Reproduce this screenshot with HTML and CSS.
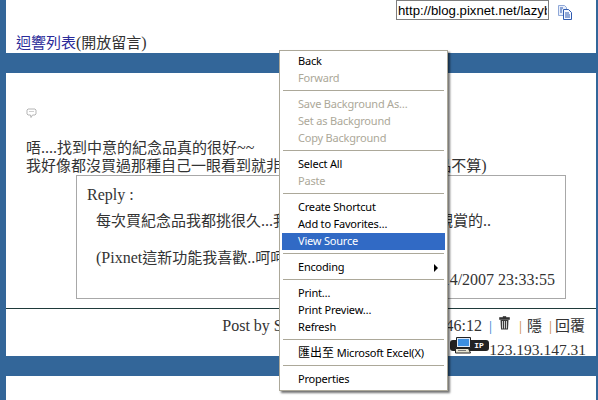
FILE: index.html
```html
<!DOCTYPE html>
<html lang="zh-Hant">
<head>
<meta charset="utf-8">
<title>迴響列表</title>
<link rel="stylesheet" href="styles.css">
</head>
<body>
<div class="page">
  <div class="url-row">
    <input class="url-input" type="text" value="http://blog.pixnet.net/lazybug" readonly>
    <svg class="copy-icon" width="16" height="15" viewBox="0 0 16 15">
      <path d="M1.500 .500h6l2 2v8h-8z" fill="#e8eefa" stroke="#8fa8d8"/>
      <path d="M6.500 4.500h5l3 3v7h-8z" fill="#f6f8ff" stroke="#2f5bb0"/>
      <path d="M8 8h4M8 10h5M8 12h5M3 3h3M3 5h2M3 7h2" stroke="#2f5bb0" fill="none"/>
    </svg>
  </div>
  <div class="title-row"><a class="title-link" href="#">迴響列表</a><span class="lat-l">(</span>開放留言<span class="lat-l">)</span></div>
  <div class="bar"></div>
  <div class="comment">
    <svg class="bubble" width="11" height="11" viewBox="0 0 11 11">
      <path d="M2 1h7l1 1v4l-1 1H6.500L5 9.500 4.500 7H2L1 6V2z" fill="#fff" stroke="#b5b5b5"/>
      <path d="M3 3.500h5" stroke="#cfcfcf"/>
    </svg>
    <p class="comment-text">唔<span class="lat-l">....</span>找到中意的紀念品真的很好<span class="lat-l">~~</span><br>我好像都沒買過那種自己一眼看到就非買不可的東西<span class="lat-l">(</span>衣服或飾品不算<span class="lat-l">)</span></p>
    <div class="reply">
      <div class="reply-label">Reply :</div>
      <p class="reply-line">每次買紀念品我都挑很久<span class="lat-l">...</span>我都是買回家後自己慢慢觀賞的<span class="lat-l">..</span></p>
      <p class="reply-line reply-gap"><span class="lat-l">(Pixnet</span>這新功能我喜歡<span class="lat-l">..</span>呵呵</p>
      <div class="reply-date">01/14/2007 23:33:55</div>
    </div>
  </div>
  <div class="post-meta">
    <div class="post-row"><span class="lat-l">Post by Stephen @ 01/14/2007 22:46:12</span><span class="sep">|</span><svg class="trash" width="11" height="14" viewBox="0 0 11 14">
        <path d="M4 .500h3v1h3.500v2H.500v-2H4z" fill="#333" stroke="#222" stroke-width=".5"/>
        <path d="M1.500 4h8l-.5 9.500H2z" fill="#3a3a3a"/>
        <path d="M3.500 5v7.500M5.500 5v7.500M7.500 5v7.500" stroke="#cfcfcf"/>
      </svg><span class="sep sep-mid">|</span>隱<span class="sep sep-alt">|</span>回覆</div>
    <div class="ip-row">
      <span class="ip-badge">
        <svg class="ip-pc" width="18" height="17" viewBox="0 0 18 17">
          <path d="M2.500 .500h14v10h-14z" fill="#dfe9f7" stroke="#222"/>
          <path d="M4 2h11v7H4z" fill="#3d8fe0"/>
          <path d="M1.500 11.500h13l2 4.500H1.500z" fill="#e6e2cf" stroke="#222"/>
          <path d="M4 13.500h8" stroke="#777"/>
        </svg>
        <span class="ip-tag">IP</span>
      </span>
      <span class="ip-num">123.193.147.31</span>
    </div>
  </div>
  <div class="bar"></div>
</div>
<div class="menu">
  <div class="mi">Back</div>
  <div class="mi off">Forward</div>
  <div class="ms"></div>
  <div class="mi off">Save Background As…</div>
  <div class="mi off">Set as Background</div>
  <div class="mi off">Copy Background</div>
  <div class="ms"></div>
  <div class="mi">Select All</div>
  <div class="mi off">Paste</div>
  <div class="ms"></div>
  <div class="mi">Create Shortcut</div>
  <div class="mi">Add to Favorites…</div>
  <div class="mi on">View Source</div>
  <div class="ms"></div>
  <div class="mi sub">Encoding<span class="arrow"></span></div>
  <div class="ms"></div>
  <div class="mi">Print…</div>
  <div class="mi">Print Preview…</div>
  <div class="mi">Refresh</div>
  <div class="ms"></div>
  <div class="mi"><span class="mi-cjk">匯出至</span> Microsoft Excel(X)</div>
  <div class="ms"></div>
  <div class="mi">Properties</div>
</div>
</body>
</html>
```
FILE: styles.css
```css
html, body {
  margin: 0;
  padding: 0;
  height: 400px;
  overflow: hidden;
  background: #fff;
}
body {
  font-family: "Liberation Serif", "Noto Sans CJK TC", serif;
  font-size: 15px;
  color: #333;
  position: relative;
}
.lat-l {
  font-size: 16px;
}
.page {
  box-sizing: border-box;
  height: 400px;
  border-left: 6px solid #336699;
  border-right: 2px solid #336699;
  display: flex;
  flex-direction: column;
}
.url-row {
  height: 19px;
  display: flex;
  justify-content: flex-end;
  align-items: flex-start;
  gap: 8px;
  padding-right: 23px;
}
.url-input {
  box-sizing: border-box;
  width: 153px;
  height: 20px;
  margin: 0;
  padding: 0 1px;
  border: 1px solid #7f7f7f;
  font-family: "Liberation Sans", sans-serif;
  font-size: 13.200px;
  color: #000;
  background: #fff;
  outline: none;
}
.copy-icon {
  margin-top: 5px;
}
.title-row {
  height: 34px;
  box-sizing: border-box;
  padding: 14px 0 0 10px;
  line-height: 20px;
  white-space: nowrap;
}
.title-link {
  color: #2b2b99;
  text-decoration: none;
}
.bar {
  height: 20px;
  flex: none;
  background: #336699;
  margin-left: -6px;
}
.comment {
  height: 236px;
  box-sizing: border-box;
  padding: 35px 0 0 20px;
  border-bottom: 1px solid #1f3a3a;
  flex: none;
}
.bubble {
  display: block;
}
.comment-text {
  margin: 20px 0 0;
  line-height: 18px;
  white-space: nowrap;
}
.reply {
  box-sizing: border-box;
  width: 490px;
  height: 124px;
  margin: 0 0 0 50px;
  border: 1px solid #a8a8a8;
  padding: 10px 10px 0;
  background: #fff;
}
.reply-label {
  font-size: 16px;
  line-height: 18px;
}
.reply-line {
  margin: 7px 0 0 9px;
  line-height: 20px;
  white-space: nowrap;
}
.reply-gap {
  margin-top: 17px;
}
.reply-date {
  margin-top: 3px;
  text-align: right;
  font-size: 16px;
  line-height: 18px;
}
.post-meta {
  flex: none;
  height: 47px;
  box-sizing: border-box;
  padding: 0 11px 0 0;
  text-align: right;
  white-space: nowrap;
}
.post-row {
  height: 31px;
  line-height: 34px;
}
.sep {
  color: #2f7fd0;
  margin: 0 7px;
}
.sep-mid {
  color: #c98a3b;
  margin: 0 5px 0 9px;
}
.sep-alt {
  color: #c98a3b;
  margin: 0 3px 0 7px;
}
.trash {
  vertical-align: 1px;
}
.ip-row {
  display: flex;
  justify-content: flex-end;
  align-items: flex-start;
  height: 16px;
  line-height: 20px;
  font-size: 15.500px;
  margin-right: -1px;
}
.ip-badge {
  display: flex;
  align-items: center;
  position: relative;
  width: 39px;
  height: 11px;
  background: #222;
  border-radius: 3px;
  color: #fff;
}
.ip-pc {
  position: absolute;
  left: 4px;
  top: -3px;
}
.ip-tag {
  margin-left: 24px;
  font: bold 8px "Liberation Mono", monospace;
}
.menu {
  position: absolute;
  box-sizing: border-box;
  left: 279px;
  top: 50px;
  width: 169px;
  height: 341px;
  padding: 2px;
  background: #fff;
  border: 1px solid #aca899;
  box-shadow: 2px 2px 2px rgba(0, 0, 0, 0.55);
  font-family: "Noto Sans", "Noto Sans CJK TC", sans-serif;
  font-size: 11px;
  letter-spacing: -0.200px;
  color: #000;
}
.mi {
  height: 17px;
  line-height: 15px;
  padding-left: 16px;
  white-space: nowrap;
  position: relative;
}
.mi-cjk {
  font-size: 12px;
  letter-spacing: 0;
}
.off {
  color: #aca899;
}
.on {
  background: #316ac5;
  color: #fff;
}
.ms {
  height: 1px;
  margin: 3px 1px 5px;
  background: #aca899;
}
.arrow {
  position: absolute;
  right: 7px;
  top: 5px;
  border-left: 4px solid #000;
  border-top: 4px solid transparent;
  border-bottom: 4px solid transparent;
}
```
